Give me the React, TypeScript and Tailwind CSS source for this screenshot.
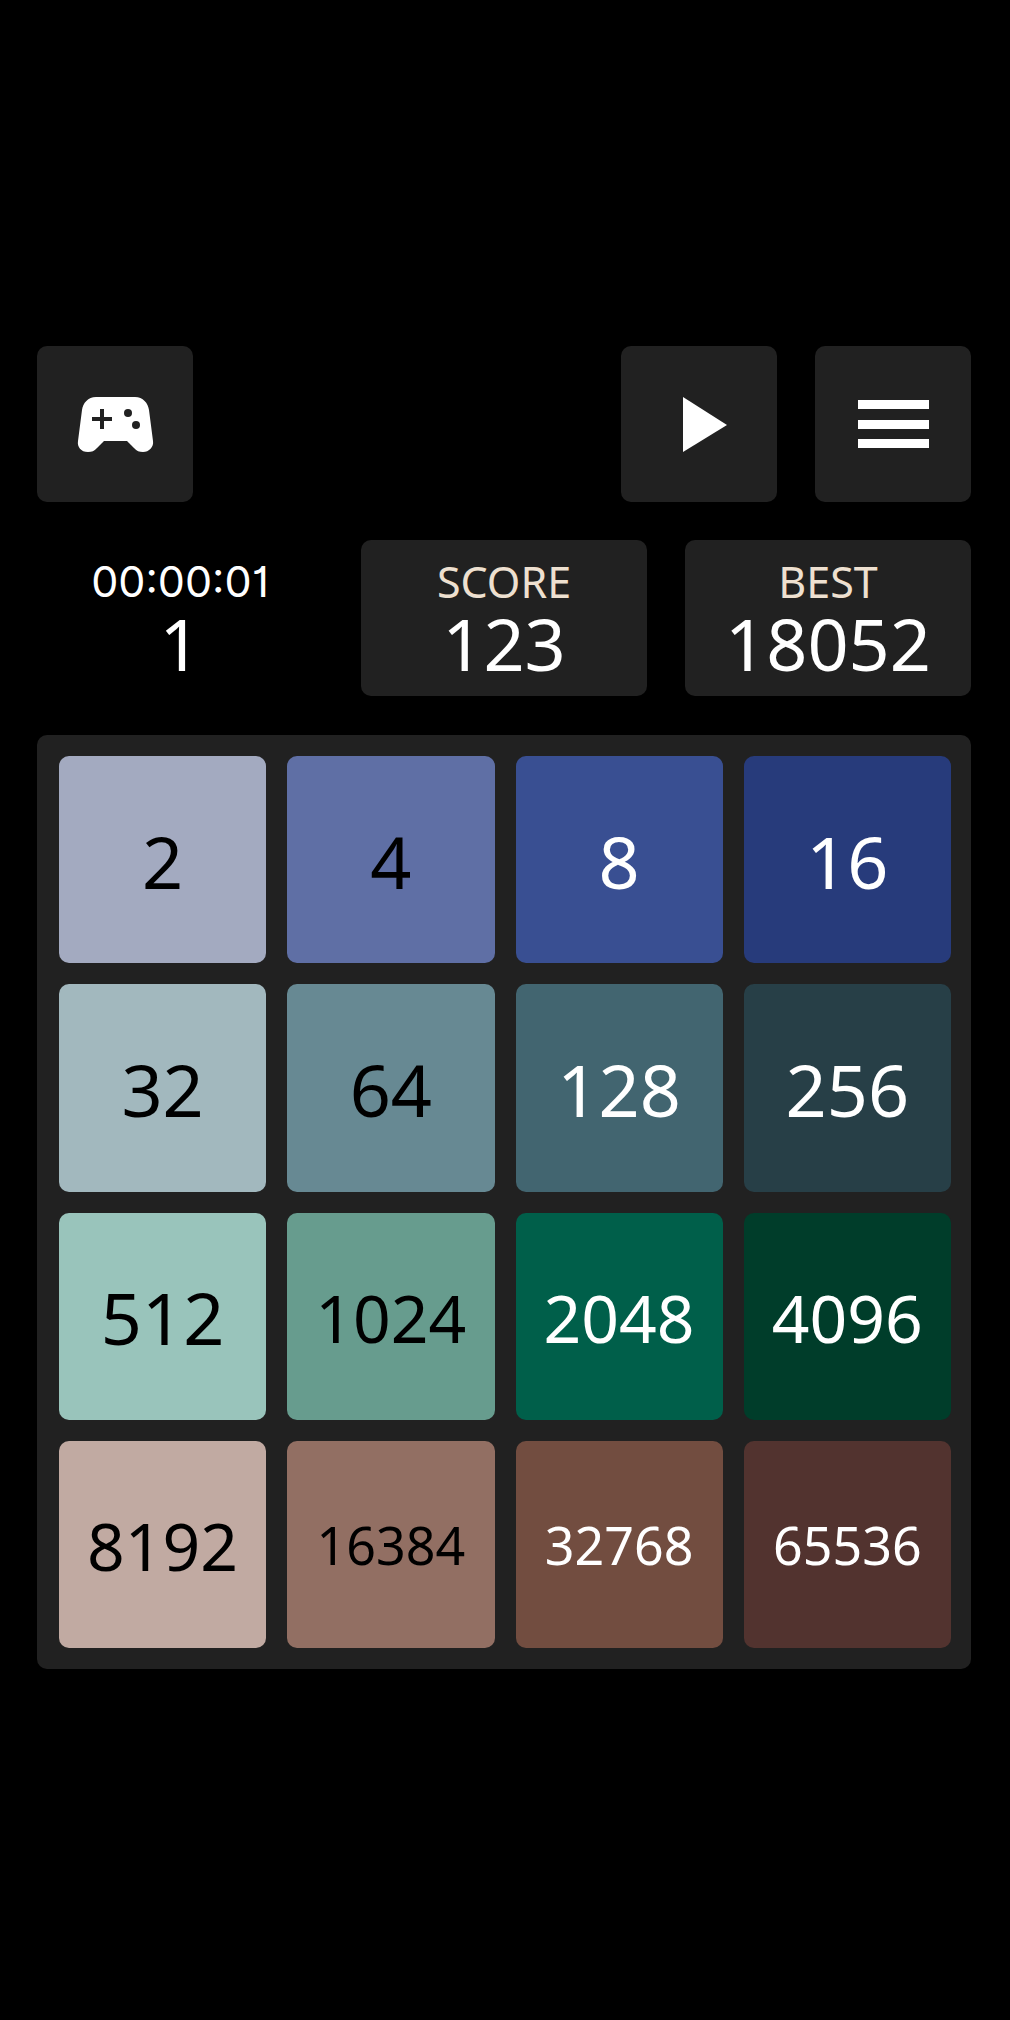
type Tile = { value: number; className: string };

const tiles: Tile[] = [
  { value: 2, className: "bg-[#a3aac0] text-black text-[72px]" },
  { value: 4, className: "bg-[#5f6fa5] text-black text-[72px]" },
  { value: 8, className: "bg-[#394f92] text-white text-[72px]" },
  { value: 16, className: "bg-[#273b7b] text-white text-[72px]" },
  { value: 32, className: "bg-[#a2b8be] text-black text-[72px]" },
  { value: 64, className: "bg-[#678993] text-black text-[72px]" },
  { value: 128, className: "bg-[#426570] text-white text-[72px]" },
  { value: 256, className: "bg-[#273f47] text-white text-[72px]" },
  { value: 512, className: "bg-[#99c4bb] text-black text-[72px]" },
  { value: 1024, className: "bg-[#679c8e] text-black text-[66px]" },
  { value: 2048, className: "bg-[#005f4a] text-white text-[66px]" },
  { value: 4096, className: "bg-[#003d2a] text-white text-[66px]" },
  { value: 8192, className: "bg-[#c1aaa2] text-black text-[66px]" },
  { value: 16384, className: "bg-[#926f63] text-black text-[52px]" },
  { value: 32768, className: "bg-[#724d40] text-white text-[52px]" },
  { value: 65536, className: "bg-[#52332f] text-white text-[52px]" },
];

const buttonClass =
  "flex size-[156px] items-center justify-center rounded-[10px] bg-[#212121] text-white";

function GamepadIcon() {
  return (
    <svg viewBox="0 0 78 58" className="w-[78px]" aria-hidden="true">
      <path
        fill="currentColor"
        d="M20 2H59C67 2 72 8 73 15L77 46C78 52 73 57 67 57C63 57 61 56 58 53L51 46H28L21 53C18 56 16 57 12 57C5 57 1 52 2 46L6 15C7 8 12 2 20 2Z"
      />
      <path stroke="#212121" strokeWidth="4" d="M26 14V34M16 24H36" />
      <circle cx="52" cy="18" r="4" fill="#212121" />
      <circle cx="60" cy="30" r="4" fill="#212121" />
    </svg>
  );
}

function PlayIcon() {
  return (
    <svg viewBox="0 0 66 58" className="w-[66px]" aria-hidden="true">
      <path fill="currentColor" d="M17 2L61 30L17 57Z" />
    </svg>
  );
}

function MenuIcon() {
  return (
    <svg viewBox="0 0 72 48" className="w-[72px]" aria-hidden="true">
      <path fill="currentColor" d="M1 0H72V9H1ZM1 20H72V29H1ZM1 39H72V48H1Z" />
    </svg>
  );
}

function Score({ label, value }: { label: string; value: number }) {
  return (
    <div className="flex flex-col items-center justify-center rounded-[10px] bg-[#212121] pb-0.5">
      <span className="text-[43px] leading-[53px] text-[#eee0d0]">{label}</span>
      <span className="text-[72px] leading-[71px]">{value}</span>
    </div>
  );
}

export default function App() {
  return (
    <main className="flex min-h-screen flex-col justify-center bg-black pl-[37px] pr-[39px] pb-[5px] font-['Noto_Sans',sans-serif] text-white">
      <header className="mb-[38px] flex gap-[38px]">
        <button type="button" aria-label="Games" className={buttonClass + " mr-auto"}>
          <GamepadIcon />
        </button>
        <button type="button" aria-label="Play" className={buttonClass}>
          <PlayIcon />
        </button>
        <button type="button" aria-label="Menu" className={buttonClass}>
          <MenuIcon />
        </button>
      </header>

      <section className="mb-[39px] grid h-[156px] grid-cols-3 gap-[38px]">
        <div className="flex flex-col items-center justify-center pb-0.5">
          <span className="font-['Inter',sans-serif] text-[43px] leading-[53px] [font-feature-settings:'cv01']">
            00:00:01
          </span>
          <span className="text-[72px] leading-[71px]">1</span>
        </div>
        <Score label="SCORE" value={123} />
        <Score label="BEST" value={18052} />
      </section>

      <section className="grid grid-cols-4 gap-[21px] rounded-[10px] bg-[#212121] py-[21px] pl-[22px] pr-[20px]">
        {tiles.map((tile) => (
          <div
            key={tile.value}
            className={"flex aspect-square items-center justify-center rounded-[10px] pt-0.5 leading-none " + tile.className}
          >
            {tile.value}
          </div>
        ))}
      </section>
    </main>
  );
}
